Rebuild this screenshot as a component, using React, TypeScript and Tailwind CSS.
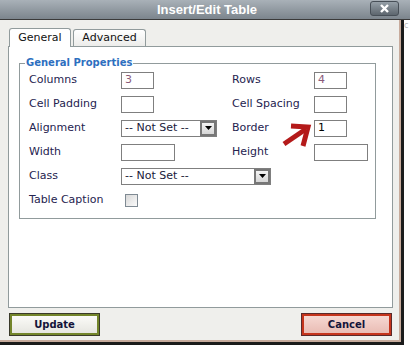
const font = { fontFamily: '"DejaVu Sans", Verdana, sans-serif' };

function TextBox({ w, value, color }: { w: string; value?: string; color?: string }) {
  return (
    <div className={`${w} h-[17px] border border-[#7f7f7f] bg-white flex items-center pl-[3px] text-[11px] ${color ?? "text-[#111]"}`}>
      {value}
    </div>
  );
}

function Select({ w }: { w: string }) {
  return (
    <div className={`${w} h-[17px] border border-[#7f7f7f] bg-white flex items-center`}>
      <span className="flex-1 pl-[3px] text-[11px] text-[#1a1a3a] whitespace-nowrap">-- Not Set --</span>
      <div className="w-[16px] h-[15px] border-2 border-[#777] bg-gradient-to-b from-[#f4f4f4] to-[#d6d6d6] flex items-center justify-center">
        <svg width="7" height="4" viewBox="0 0 7 4">
          <path d="M0 0 L7 0 L3.5 4 Z" fill="#000" />
        </svg>
      </div>
    </div>
  );
}

function Label({ children }: { children: string }) {
  return <span className="text-[11px] text-[#25234f] whitespace-nowrap">{children}</span>;
}

export default function App() {
  return (
    <div className="relative w-[410px] h-[355px] bg-white overflow-hidden" style={font}>
      <div className="h-[19px] w-full bg-gradient-to-b from-[#a9b1b8] to-[#7c858d] flex items-center relative border-b border-[#3a3a3a] box-content">
        <span className="flex-1 text-center text-white font-bold pl-[4px]" style={{ fontFamily: '"Liberation Sans", Arial, sans-serif', fontSize: "13px" }}>
          Insert/Edit Table
        </span>
        <div className="absolute left-[370px] top-[1px] w-[29px] h-[15px] rounded-[3px] border border-[#474f57] bg-gradient-to-b from-[#96a0a8] to-[#5d666e] flex items-center justify-center">
          <svg width="9" height="9" viewBox="0 0 9 9">
            <path d="M1 1 L8 8 M8 1 L1 8" stroke="#fff" strokeWidth="2.4" />
          </svg>
        </div>
      </div>

      <div className="w-[404px] h-[325px] bg-[#efefec] border-r-[3px] border-b-[3px] border-[#1b1b1b] flex flex-col pl-[8px] pt-[8px] shadow-[inset_-2px_-2px_0_#c7ab9c]">
        <div className="flex items-end h-[18px] pl-[1px] gap-[2px]">
          <div className="w-[62px] rounded-t-[3px] border border-b-0 border-[#919b9c] bg-white flex items-center justify-center text-[11px] text-[#111] relative z-10 -mb-[1px] h-[19px]">
            General
          </div>
          <div className="h-[17px] w-[73px] rounded-t-[3px] border border-b-0 border-[#919b9c] bg-gradient-to-b from-white to-[#ececea] flex items-center justify-center text-[11px] text-[#111]">
            Advanced
          </div>
        </div>
        <div className="w-[385px] h-[262px] border border-[#919b9c] bg-white pl-[10px] pt-[10px]">
          <fieldset className="w-[357px] border border-[#919b9c] pb-[6px]">
            <legend className="ml-[5px] px-[1px] text-[10px] font-bold text-[#2d6fbf] leading-[12px]">General Properties</legend>
            <div className="grid grid-cols-[92px_111px_82px_1fr] auto-rows-[24px] items-center pl-[9px] -mt-[1px]">
              <Label>Columns</Label>
              <TextBox w="w-[33px]" value="3" color="text-[#8a5a7a]" />
              <Label>Rows</Label>
              <TextBox w="w-[33px]" value="4" color="text-[#8a5a7a]" />

              <Label>Cell Padding</Label>
              <TextBox w="w-[33px]" />
              <Label>Cell Spacing</Label>
              <TextBox w="w-[33px]" />

              <Label>Alignment</Label>
              <Select w="w-[96px]" />
              <Label>Border</Label>
              <TextBox w="w-[33px]" value="1" color="text-[#000]" />

              <Label>Width</Label>
              <TextBox w="w-[54px]" />
              <Label>Height</Label>
              <TextBox w="w-[54px]" />

              <Label>Class</Label>
              <div className="col-span-3">
                <Select w="w-[150px]" />
              </div>

              <div className="h-[28px] flex items-center">
                <Label>Table Caption</Label>
              </div>
              <div className="col-span-3 h-[28px] flex items-center pl-[4px]">
                <div className="w-[13px] h-[13px] border border-[#7f8a93] bg-gradient-to-br from-[#d8d8d8] to-[#fbfbfb]" />
              </div>
            </div>
          </fieldset>
        </div>
        <div className="flex justify-between w-[385px] pl-[2px] pr-[2px] mt-[6px]">
          <button className="w-[89px] h-[21px] border-2 border-[#73852a] outline outline-1 outline-[#3a3a2a] bg-gradient-to-b from-[#fbfbf8] to-[#e6e6e0] text-[10px] font-bold text-[#14143a]">
            Update
          </button>
          <button className="w-[89px] h-[21px] border-2 border-[#c5341c] outline outline-1 outline-[#5a2a2a] bg-gradient-to-b from-[#f6d8d2] to-[#e9bcb4] text-[10px] font-bold text-[#14143a]">
            Cancel
          </button>
        </div>
      </div>

      <span className="absolute left-[404px] top-[21px] text-[8px] leading-[10px] text-[#b8b8b8]">c</span>

      <svg className="absolute left-0 top-0 pointer-events-none" width="410" height="355">
        <path d="M284 144 L306 129" stroke="#b41a1a" strokeWidth="5" />
        <path d="M291 126 L308 127 L303 146" stroke="#b41a1a" strokeWidth="5" fill="none" strokeLinejoin="miter" />
      </svg>
    </div>
  );
}
